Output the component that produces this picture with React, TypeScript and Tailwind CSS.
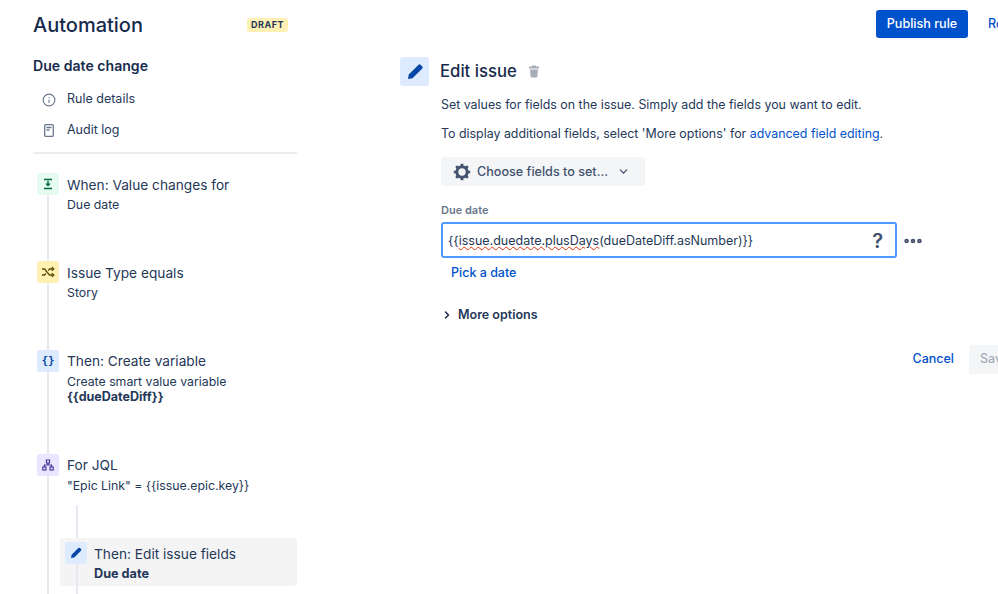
import React from "react";
import { ChevronDown, ChevronRight, Info, MoreHorizontal } from "lucide-react";

function PencilIcon({ size }: { size: number }) {
  return (
    <svg width={size} height={size} viewBox="0 0 24 24" fill="#0747a6">
      <path d="M16 3.500a2 2 0 0 1 2.800 0l1.700 1.700a2 2 0 0 1 0 2.800L9 19.500l-5.500 1 1-5.500z" />
    </svg>
  );
}

function ValueIcon() {
  return (
    <svg width="12" height="12" viewBox="0 0 12 12" fill="none" stroke="#006644">
      <path d="M2 1.500h8M2 10.500h8" strokeWidth="1.400" />
      <path d="M6 3v4.500" strokeWidth="1.400" />
      <path d="M3.800 5.800 6 8.200l2.200-2.400z" fill="#006644" strokeWidth="0.500" />
    </svg>
  );
}

function ShuffleIcon() {
  return (
    <svg width="14" height="12" viewBox="0 0 14 12" fill="none" stroke="#5e4a00" strokeWidth="1.300">
      <path d="M1 3h2.500l5 6H12M1 9h2.500l1.400-1.700M7.200 4.600 8.500 3H12" />
      <path d="M10.800 1.200 12.800 3l-2 1.800M10.800 7.200l2 1.800-2 1.800" />
    </svg>
  );
}

function HierarchyIcon() {
  return (
    <svg width="12" height="12" viewBox="0 0 12 12" fill="none" stroke="#403294" strokeWidth="1.100">
      <rect x="4.400" y="1" width="3.200" height="3" />
      <rect x="0.800" y="8" width="3.200" height="3" />
      <rect x="8" y="8" width="3.200" height="3" />
      <path d="M6 4v2M2.400 8V6h7.200v2" />
    </svg>
  );
}

function DocIcon() {
  return (
    <svg width="10" height="13" viewBox="0 0 10 13" fill="none" stroke="#6b778c" strokeWidth="1.300">
      <rect x="0.700" y="0.700" width="8.600" height="11.600" rx="1" />
      <path d="M2.500 3.500h5M2.500 6h3" />
    </svg>
  );
}

function TrashIcon() {
  return (
    <svg width="12" height="13" viewBox="0 0 12 13" fill="#a5adba">
      <rect x="1" y="1.500" width="10" height="2" rx="0.500" />
      <rect x="4" y="0.500" width="4" height="1.500" />
      <path d="M2 4.500h8l-.7 7.200a1 1 0 0 1-1 .8H3.700a1 1 0 0 1-1-.8z" />
    </svg>
  );
}

function GearIcon() {
  return (
    <svg width="18" height="18" viewBox="0 0 18 18" fill="none" stroke="#42526e">
      <circle cx="9" cy="9" r="5.200" strokeWidth="3" />
      <path
        d="M9 .8v3M9 14.200v3M.8 9h3M14.200 9h3M3.200 3.200l2.100 2.100M12.700 12.700l2.100 2.100M14.800 3.200l-2.100 2.100M5.300 12.700l-2.100 2.100"
        strokeWidth="2.600"
      />
    </svg>
  );
}

function Step({
  icon,
  tint,
  title,
  height,
  tight,
  children,
  nested,
}: {
  icon: React.ReactNode;
  tint: string;
  title: string;
  height: string;
  tight?: boolean;
  children: React.ReactNode;
  nested?: React.ReactNode;
}) {
  return (
    <div className={`flex gap-2 ${height}`}>
      <div className="flex flex-col items-center w-[22px] shrink-0">
        <div className={`w-[22px] h-[22px] rounded-[3px] flex items-center justify-center shrink-0 ${tint}`}>{icon}</div>
        <div className="w-[2px] flex-1 bg-[#e6e8f2]" />
      </div>
      <div className={`flex-1 min-w-0 flex flex-col ${tight ? "pt-[1px]" : "pt-[2px]"}`}>
        <div className="text-[13.700px] leading-[20px] text-[#253858]">{title}</div>
        <div className={`text-[12.300px] leading-[15px] text-[#253858] ${tight ? "mt-[3px]" : "mt-[2px]"}`}>{children}</div>
        {nested}
      </div>
    </div>
  );
}

function NestedStep() {
  return (
    <div className="-ml-[7px] mt-[12px] flex-1 flex flex-col">
      <div className="w-[2px] h-[33px] ml-[16px] bg-[#e6e8f2]" />
      <div className="relative h-[48px] rounded-[3px] bg-[#f4f4f5] flex gap-[7px] pl-[5px] pt-[4px]">
        <div className="absolute left-[16px] top-[26px] bottom-0 w-[2px] bg-[#e6e8f2]" />
        <div className="w-[22px] h-[22px] rounded-[3px] bg-[#deebff] flex items-center justify-center shrink-0">
          <PencilIcon size={14} />
        </div>
        <div className="pt-[2px]">
          <div className="text-[13.700px] leading-[20px] text-[#253858]">Then: Edit issue fields</div>
          <div className="text-[12.700px] leading-[15px] mt-[2px] font-bold text-[#253858]">Due date</div>
        </div>
      </div>
      <div className="w-[2px] flex-1 ml-[16px] bg-[#e6e8f2]" />
    </div>
  );
}

export default function App() {
  return (
    <div className="w-[998px] h-[594px] overflow-hidden bg-white flex font-['Inter',sans-serif] text-[#253858]">
      {/* Sidebar */}
      <div className="w-[264px] ml-[33px] shrink-0 flex flex-col">
        <div className="flex items-center justify-between h-[26px] mt-[12px] pr-[9px]">
          <h1 className="text-[20px] font-medium text-[#172b4d]">Automation</h1>
          <span className="h-[14px] px-[4px] rounded-[3px] bg-[#fff0b3] text-[9px] leading-[14px] font-bold tracking-[0.5px] text-[#253858]">
            DRAFT
          </span>
        </div>
        <h2 className="mt-[18px] text-[14.100px] leading-[20px] font-semibold text-[#172b4d]">Due date change</h2>
        <div className="mt-[8px] flex flex-col">
          <div className="flex items-center h-[31px] pl-[9px] gap-[11px] text-[12.500px]">
            <Info size={14} color="#6b778c" className="w-[14px]" />
            <span>Rule details</span>
          </div>
          <div className="flex items-center h-[31px] pl-[11px] gap-[13px] text-[12.500px]">
            <DocIcon />
            <span>Audit log</span>
          </div>
        </div>
        <div className="h-[2px] bg-[#ebecf0] mt-[6px]" />
        <div className="mt-[19px] pl-[4px] flex-1 min-h-0 flex flex-col">
          <Step icon={<ValueIcon />} tint="bg-[#e3fcef]" title="When: Value changes for" height="h-[88px]">
            Due date
          </Step>
          <Step icon={<ShuffleIcon />} tint="bg-[#fff0b3]" title="Issue Type equals" height="h-[89px]">
            Story
          </Step>
          <Step
            icon={<span className="text-[11px] font-bold text-[#0747a6] font-['DejaVu_Sans_Mono',monospace]">{"{}"}</span>}
            tint="bg-[#deebff]"
            title="Then: Create variable"
            height="h-[104px]"
            tight
          >
            Create smart value variable
            <div className="font-bold text-[12.500px]">{"{{dueDateDiff}}"}</div>
          </Step>
          <Step
            icon={<HierarchyIcon />}
            tint="bg-[#eae6ff]"
            title="For JQL"
            height="flex-1"
            tight
            nested={<NestedStep />}
          >
            {'"Epic Link" = {{issue.epic.key}}'}
          </Step>
        </div>
      </div>

      {/* Main */}
      <div className="flex-1 min-w-0 pl-[103px] flex flex-col">
        <div className="flex justify-end h-[47px] pt-[10px] -mr-[20px] gap-[20px]">
          <button className="w-[92px] h-[28px] rounded-[3px] bg-[#0052cc] text-white text-[12.600px] font-medium">
            Publish rule
          </button>
          <span className="w-[30px] overflow-hidden whitespace-nowrap text-[12.500px] font-medium text-[#0052cc] leading-[28px]">
            Revert
          </span>
        </div>
        <div className="flex items-center mt-[10px] gap-[11px]">
          <div className="w-[29px] h-[29px] rounded-[3px] bg-[#deebff] flex items-center justify-center">
            <PencilIcon size={20} />
          </div>
          <h2 className="text-[16.700px] font-medium text-[#172b4d]">Edit issue</h2>
          <TrashIcon />
        </div>
        <div className="ml-[41px] w-[511px] flex flex-col">
          <p className="mt-[10px] text-[12.400px] leading-[18px]">
            Set values for fields on the issue. Simply add the fields you want to edit.
          </p>
          <p className="mt-[11px] text-[12.400px] leading-[18px]">
            To display additional fields, select 'More options' for{" "}
            <span className="text-[#0052cc]">advanced field editing</span>.
          </p>
          <button className="mt-[14px] w-[204px] h-[29px] rounded-[3px] bg-[#f4f5f7] flex items-center pl-[12px] text-[12.600px] font-medium text-[#42526e]">
            <GearIcon />
            <span className="ml-[6px] translate-y-[1px]">Choose fields to set...</span>
            <ChevronDown size={13} strokeWidth={2.5} className="ml-[9px]" />
          </button>
          <label className="mt-[16px] text-[11px] leading-[16px] font-semibold text-[#6b778c]">Due date</label>
          <div className="flex items-center mt-[4px]">
            <div className="w-[456px] h-[36px] rounded-[3px] border-2 border-[#4c9aff] flex items-center pl-[5px] pr-[12px]">
              <span className="text-[12.500px] text-[#253858] flex-1 translate-y-[1px]">
                {"{{"}
                <span className="underline decoration-wavy decoration-[#de350b] decoration-1">issue.duedate.plusDays</span>
                (dueDateDiff.asNumber)
                {"}}"}
              </span>
              <span className="text-[20px] leading-[20px] font-semibold text-[#42526e] translate-y-[1px]">?</span>
            </div>
            <MoreHorizontal size={22} strokeWidth={3} color="#42526e" className="ml-[5px] translate-y-[1px]" />
          </div>
          <span className="mt-[6px] ml-[10px] text-[12.500px] leading-[18px] font-medium text-[#0052cc]">Pick a date</span>
          <div className="flex items-center mt-[24px] text-[12.500px] leading-[18px] font-semibold text-[#253858]">
            <ChevronRight size={12} strokeWidth={3} color="#172b4d" />
            <span className="ml-[5px]">More options</span>
          </div>
        </div>
        <div className="flex items-center justify-end -mr-[23px] mt-[21px]">
          <span className="text-[12.500px] font-medium text-[#0052cc]">Cancel</span>
          <button className="ml-[15px] w-[52px] h-[29px] rounded-[3px] bg-[#f4f5f7] text-left pl-[11px] text-[12.500px] font-medium text-[#a5adba]">
            Save
          </button>
        </div>
      </div>
    </div>
  );
}
